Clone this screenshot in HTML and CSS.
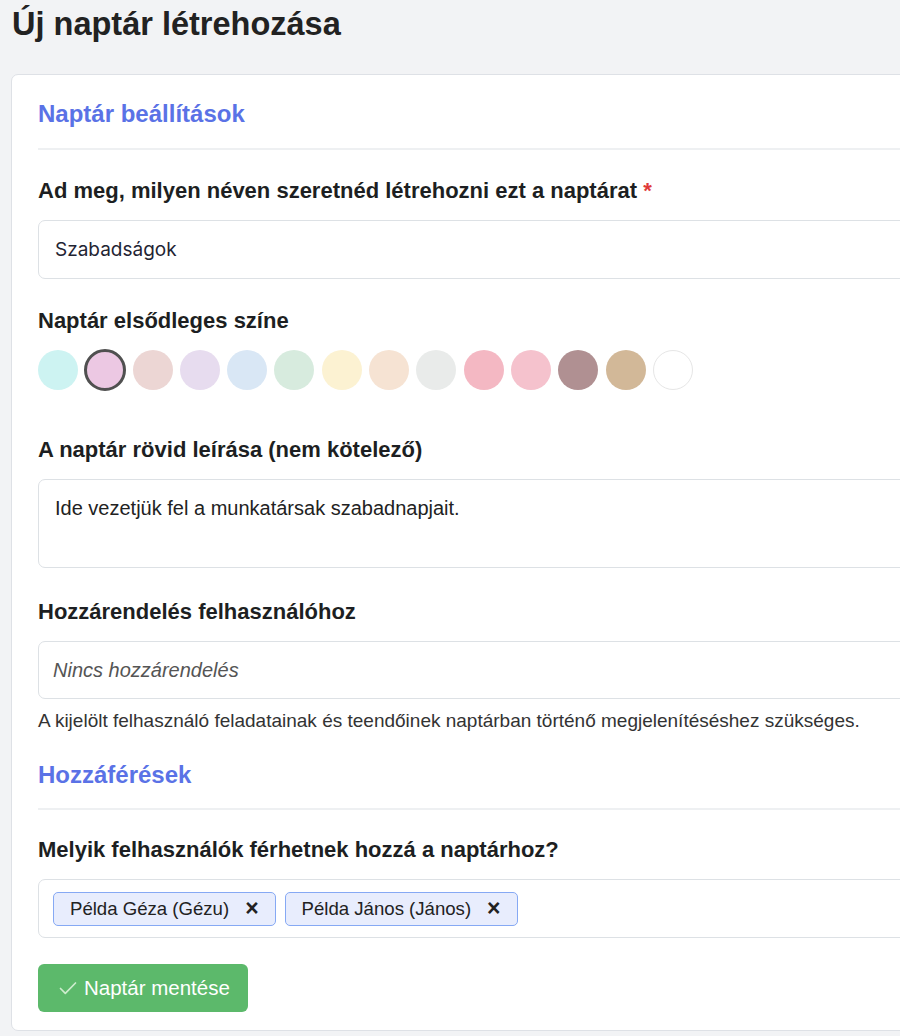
FILE: index.html
```html
<!DOCTYPE html>
<html lang="hu">
<head>
    <meta charset="UTF-8">
    <meta name="viewport" content="width=device-width, initial-scale=1.0">
    <title>Új naptár létrehozása</title>
    <link rel="stylesheet" href="styles.css">
</head>
<body>

    <h1 class="page-title">Új naptár létrehozása</h1>

    <div class="card">
        <h2 class="section-title">Naptár beállítások</h2>

        <div class="form-group">
            <label for="name">Ad meg, milyen néven szeretnéd létrehozni ezt a naptárat <span class="required">*</span></label>
            <div class="field" id="name">Szabadságok</div>
        </div>

        <div class="form-group colors">
            <label>Naptár elsődleges színe</label>
            <div class="swatches">
                <span class="swatch" style="background:#cdf3f2"></span>
                <span class="swatch selected" style="background:#ecc8e3"></span>
                <span class="swatch" style="background:#ecd6d4"></span>
                <span class="swatch" style="background:#e7dcef"></span>
                <span class="swatch" style="background:#d9e7f5"></span>
                <span class="swatch" style="background:#d7ebde"></span>
                <span class="swatch" style="background:#fcf2d2"></span>
                <span class="swatch" style="background:#f6e3d3"></span>
                <span class="swatch" style="background:#e9ebea"></span>
                <span class="swatch" style="background:#f4b8c3"></span>
                <span class="swatch" style="background:#f5c2cd"></span>
                <span class="swatch" style="background:#b09092"></span>
                <span class="swatch" style="background:#d2b898"></span>
                <span class="swatch white"></span>
            </div>
        </div>

        <div class="form-group desc">
            <label for="desc">A naptár rövid leírása (nem kötelező)</label>
            <div class="field textarea" id="desc">Ide vezetjük fel a munkatársak szabadnapjait.</div>
        </div>

        <div class="form-group">
            <label for="owner">Hozzárendelés felhasználóhoz</label>
            <div class="field placeholder" id="owner">Nincs hozzárendelés</div>
            <p class="help">A kijelölt felhasználó feladatainak és teendőinek naptárban történő megjelenítéséshez szükséges.</p>
        </div>

        <h2 class="section-title access">Hozzáférések</h2>

        <div class="form-group">
            <label>Melyik felhasználók férhetnek hozzá a naptárhoz?</label>
            <div class="field tags">
                <span class="tag">Példa Géza (Gézu) <span class="tag-remove">×</span></span>
                <span class="tag">Példa János (János) <span class="tag-remove">×</span></span>
            </div>
        </div>

        <button class="btn-save">
            <svg width="20" height="20" viewBox="0 0 20 20"><path d="M2.5 10.5l4.8 4.8L17.5 5" fill="none" stroke="#cdeccd" stroke-width="1.7" stroke-linecap="round" stroke-linejoin="round"/></svg>
            Naptár mentése
        </button>
    </div>

</body>
</html>
```

FILE: styles.css
```css
html {
    overflow: hidden;
}

body {
    font-family: 'Liberation Sans', Arial, sans-serif;
    margin: 0;
    padding: 0 0 0 11px;
    background-color: #f2f3f5;
    color: #212529;
}

.page-title {
    font-size: 32.5px;
    line-height: 38px;
    font-weight: bold;
    color: #222;
    margin: 0;
    padding: 5px 0 0 1px;
    height: 74px;
    box-sizing: border-box;
}

.card {
    width: 1000px;
    background-color: #ffffff;
    border: 1px solid #dee1e6;
    border-radius: 7px;
    padding: 25px 26px 18px 26px;
    box-sizing: border-box;
}

.section-title {
    font-size: 24px;
    line-height: 28px;
    font-weight: bold;
    color: #5a72e6;
    margin: 0 0 28px 0;
    padding-bottom: 20px;
    border-bottom: 2px solid #eef0f2;
}

.section-title.access {
    padding-bottom: 19px;
    margin-bottom: 27px;
}

.form-group {
    margin-bottom: 29px;
}

.form-group.colors {
    margin-bottom: 47px;
}

.form-group.desc {
    margin-bottom: 31px;
}

label {
    display: block;
    font-size: 22px;
    line-height: 26px;
    font-weight: bold;
    color: #1d1f22;
    margin-bottom: 16px;
}

.required {
    color: #e03a3a;
}

.field {
    border: 1px solid #dde1e5;
    border-radius: 7px;
    height: 59px;
    box-sizing: border-box;
    padding: 0 16px;
    display: flex;
    align-items: center;
    font-family: Inter, 'Liberation Sans', sans-serif;
    font-size: 19px;
    color: #1f2433;
}

.textarea {
    height: 89px;
    align-items: flex-start;
    padding-top: 17px;
    font-family: 'Liberation Sans', Arial, sans-serif;
    font-size: 20px;
    line-height: 23px;
    color: #222;
}

.placeholder {
    height: 58px;
    padding-left: 14px;
    font-family: 'Liberation Sans', Arial, sans-serif;
    font-size: 20px;
    font-style: italic;
    color: #555;
}

.help {
    font-size: 19px;
    line-height: 22px;
    color: #333;
    margin: 11px 0 0 0;
}

.swatches {
    display: flex;
    gap: 7.3px;
}

.swatch {
    width: 40px;
    height: 40px;
    border-radius: 50%;
    box-sizing: border-box;
}

.swatch.selected {
    border: 3px solid #505050;
    width: 42px;
    height: 42px;
    margin: -1px;
}

.swatch.white {
    background: #fff;
    border: 1px solid #e6e6e6;
}

.tags {
    gap: 9px;
    padding: 0 14px;
    font-family: 'Liberation Sans', Arial, sans-serif;
}

.tag {
    display: inline-flex;
    align-items: center;
    height: 34px;
    box-sizing: border-box;
    padding: 0 16px 0 16px;
    background-color: #e8edfd;
    border: 1px solid #86a9f4;
    border-radius: 5px;
    font-size: 18.6px;
    color: #222;
}

.tag-remove {
    font-weight: bold;
    font-size: 23px;
    margin-left: 16px;
    line-height: 1;
}

.btn-save {
    display: inline-flex;
    align-items: center;
    gap: 6px;
    background-color: #5cb96b;
    color: white;
    border: none;
    border-radius: 6px;
    height: 48px;
    padding: 0 18px 0 20px;
    font-family: 'Liberation Sans', Arial, sans-serif;
    font-size: 20.5px;
    margin-top: -3px;
}
```
